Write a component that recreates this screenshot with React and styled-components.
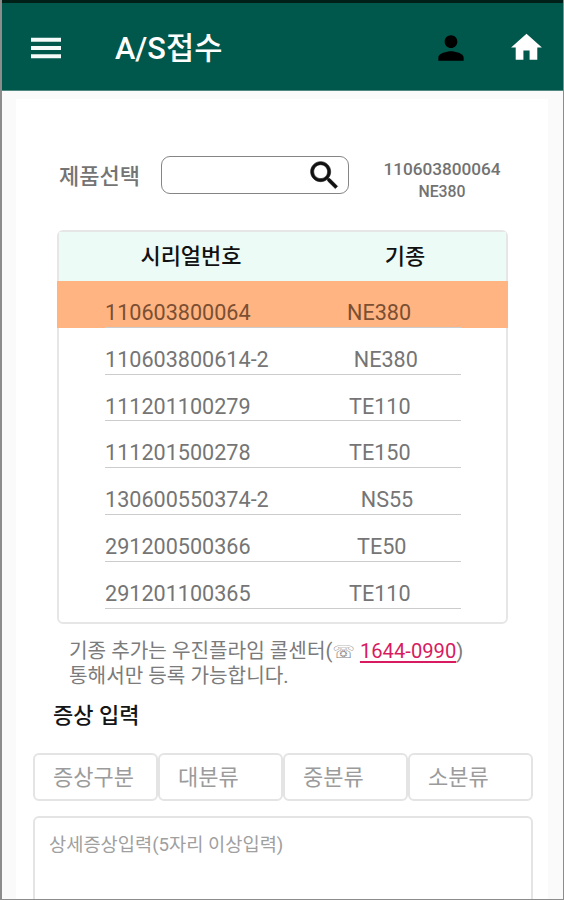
import React from 'react'
import styled, { createGlobalStyle } from 'styled-components'

const GlobalStyle = createGlobalStyle`
  * {
    box-sizing: border-box;
  }

  body {
    margin: 0;
    background: #fafafa;
    font-family: Roboto, 'Noto Sans CJK KR', sans-serif;
  }
`

const Screen = styled.div`
  width: 564px;
  height: 900px;
  overflow: hidden;
  display: flex;
  flex-direction: column;
  background: #fafafa;
  border: solid #8c8c8c;
  border-width: 0 1px 1px 2px;
`

const AppBar = styled.header`
  flex: none;
  display: flex;
  align-items: center;
  height: 91px;
  margin: 0 -1px 0 -2px;
  padding: 2px 19px 0 25px;
  background: #00574b;
  border-top: 3px solid #001f17;
  border-bottom: 1px solid #50877e;
  border-left: 1px solid #2c6a60;

  svg {
    display: block;
    flex: none;
  }
`

const Title = styled.h1`
  flex: 1;
  margin: 2px 0 0 49px;
  color: #fff;
  font-size: 30.7px;
  font-weight: 500;
  line-height: 40px;
`

const HomeLink = styled.a`
  margin-left: 38px;
`

const Content = styled.main`
  flex: none;
  height: 803px;
  margin: 8px 15px 0 14px;
  padding: 57px 16px 0 17px;
  background: #fff;
`

const ProductRow = styled.div`
  display: flex;
  height: 38px;
  margin: 0 0 36px 26px;
`

const Label = styled.label`
  width: 102px;
  padding-top: 2px;
  color: #747474;
  font-size: 22px;
  font-weight: 500;
  line-height: 38px;
`

const SearchBox = styled.div`
  display: flex;
  align-items: center;
  justify-content: flex-end;
  width: 188px;
  height: 38px;
  padding-right: 5px;
  border: 1.5px solid #858585;
  border-radius: 9px;

  svg {
    stroke: #111;
    stroke-width: 0.4;
  }
`

const Selected = styled.div`
  width: 124px;
  margin-left: 31px;
  color: #727272;
  font-weight: 500;
  text-align: center;
`

const SelectedSerial = styled.div`
  font-size: 17.2px;
  line-height: 26px;
`

const SelectedModel = styled.div`
  font-size: 15.8px;
  line-height: 19px;
`

const Table = styled.div`
  width: 451px;
  height: 394px;
  margin-left: 24px;
  border: 2px solid #e6e6e6;
  border-radius: 6px;
`

const TableHead = styled.div`
  display: flex;
  height: 49px;
  color: #111;
  background: #edfbf7;
  font-size: 22px;
  font-weight: 500;
  line-height: 49px;
  text-align: center;
`

const HeadCell = styled.div`
  width: ${props => props.$width}px;
`

const TableRow = styled.div`
  height: 46.8px;
  margin: 0 -2px;
  padding: 0 47px 0 48px;
  color: ${props => (props.$active ? '#7a4f33' : '#757575')};
  background: ${props => (props.$active ? '#ffb482' : 'transparent')};
`

const RowLine = styled.div`
  display: flex;
  height: 100%;
  padding-top: 16px;
  border-bottom: 1.5px solid #cccccc;
  font-size: 21.6px;
  line-height: 32px;
`

const Serial = styled.span`
  flex: none;
  min-width: 146px;
`

const Model = styled.span`
  margin-left: ${props => props.$gap}px;
`

const Notice = styled.p`
  margin: 15px 0 0 36px;
  color: #7b7b7b;
  font-size: 20.2px;
  line-height: 24px;
  white-space: nowrap;
`

const PhoneMark = styled.span`
  font-family: 'DejaVu Sans', sans-serif;
  font-size: 18px;
`

const PhoneLink = styled.a`
  color: #d81b60;
  text-decoration: underline;
  text-decoration-thickness: 1.5px;
  text-underline-offset: 3px;
`

const SectionTitle = styled.h2`
  margin: 12px 0 21px 20px;
  color: #151515;
  font-size: 22px;
  font-weight: 500;
  line-height: 32px;
`

const Categories = styled.div`
  display: grid;
  grid-template-columns: repeat(4, 1fr);
  margin: 0 -1px 15px 0;
`

const Category = styled.div`
  height: 48px;
  padding-left: 18px;
  color: #9b9b9b;
  border: 2px solid #e4e4e4;
  border-radius: 6px;
  font-size: 22px;
  line-height: 46px;
`

const Detail = styled.div`
  height: 120px;
  margin-right: -1px;
  padding: 13px 14px;
  color: #a0a0a0;
  border: 2px solid #e4e4e4;
  border-radius: 6px;
  font-size: 18.7px;
  line-height: 28px;
`

const products = [
  { serial: '110603800064', model: 'NE380', gap: 96 },
  { serial: '110603800614-2', model: 'NE380', gap: 85 },
  { serial: '111201100279', model: 'TE110', gap: 98 },
  { serial: '111201500278', model: 'TE150', gap: 98 },
  { serial: '130600550374-2', model: 'NS55', gap: 92 },
  { serial: '291200500366', model: 'TE50', gap: 106 },
  { serial: '291201100365', model: 'TE110', gap: 98 }
]

const categories = ['증상구분', '대분류', '중분류', '소분류']

const Icon = ({ size, color, d }) => (
  <svg width={size} height={size} viewBox="0 0 24 24" fill={color}>
    <path d={d} />
  </svg>
)

export default function App() {
  return (
    <>
      <GlobalStyle />
      <Screen>
        <AppBar>
          <Icon
            size={40}
            color="#f4fbf8"
            d="M3 18.2h18v-2.4H3v2.4zm0-5h18v-2.4H3v2.4zm0-7.4v2.4h18V5.8H3z"
          />
          <Title>A/S접수</Title>
          <Icon
            size={38}
            color="#000"
            d="M12 12c2.21 0 4-1.79 4-4s-1.79-4-4-4-4 1.79-4 4 1.79 4 4 4zm0 2c-2.67 0-8 1.34-8 4v2h16v-2c0-2.66-5.33-4-8-4z"
          />
          <HomeLink>
            <Icon
              size={37}
              color="#fff"
              d="M10 20v-6h4v6h5v-8h3L12 3 2 12h3v8z"
            />
          </HomeLink>
        </AppBar>
        <Content>
          <ProductRow>
            <Label>제품선택</Label>
            <SearchBox>
              <Icon
                size={37}
                color="#111"
                d="M15.5 14h-.79l-.28-.27C15.41 12.59 16 11.11 16 9.5 16 5.91 13.09 3 9.5 3S3 5.91 3 9.5 5.91 16 9.5 16c1.61 0 3.09-.59 4.23-1.57l.27.28v.79l5 4.99L20.49 19l-4.99-5zm-6 0C7.01 14 5 11.99 5 9.5S7.01 5 9.5 5 14 7.01 14 9.5 11.99 14 9.5 14z"
              />
            </SearchBox>
            <Selected>
              <SelectedSerial>110603800064</SelectedSerial>
              <SelectedModel>NE380</SelectedModel>
            </Selected>
          </ProductRow>
          <Table>
            <TableHead>
              <HeadCell $width={264}>시리얼번호</HeadCell>
              <HeadCell $width={164}>기종</HeadCell>
            </TableHead>
            {products.map((product, i) => (
              <TableRow key={product.serial} $active={i === 0}>
                <RowLine>
                  <Serial>{product.serial}</Serial>
                  <Model $gap={product.gap}>{product.model}</Model>
                </RowLine>
              </TableRow>
            ))}
          </Table>
          <Notice>
            기종 추가는 우진플라임 콜센터(<PhoneMark>☏</PhoneMark>{' '}
            <PhoneLink href="tel:1644-0990">1644-0990</PhoneLink>)
            <br />
            통해서만 등록 가능합니다.
          </Notice>
          <SectionTitle>증상 입력</SectionTitle>
          <Categories>
            {categories.map(name => (
              <Category key={name}>{name}</Category>
            ))}
          </Categories>
          <Detail>상세증상입력(5자리 이상입력)</Detail>
        </Content>
      </Screen>
    </>
  )
}
